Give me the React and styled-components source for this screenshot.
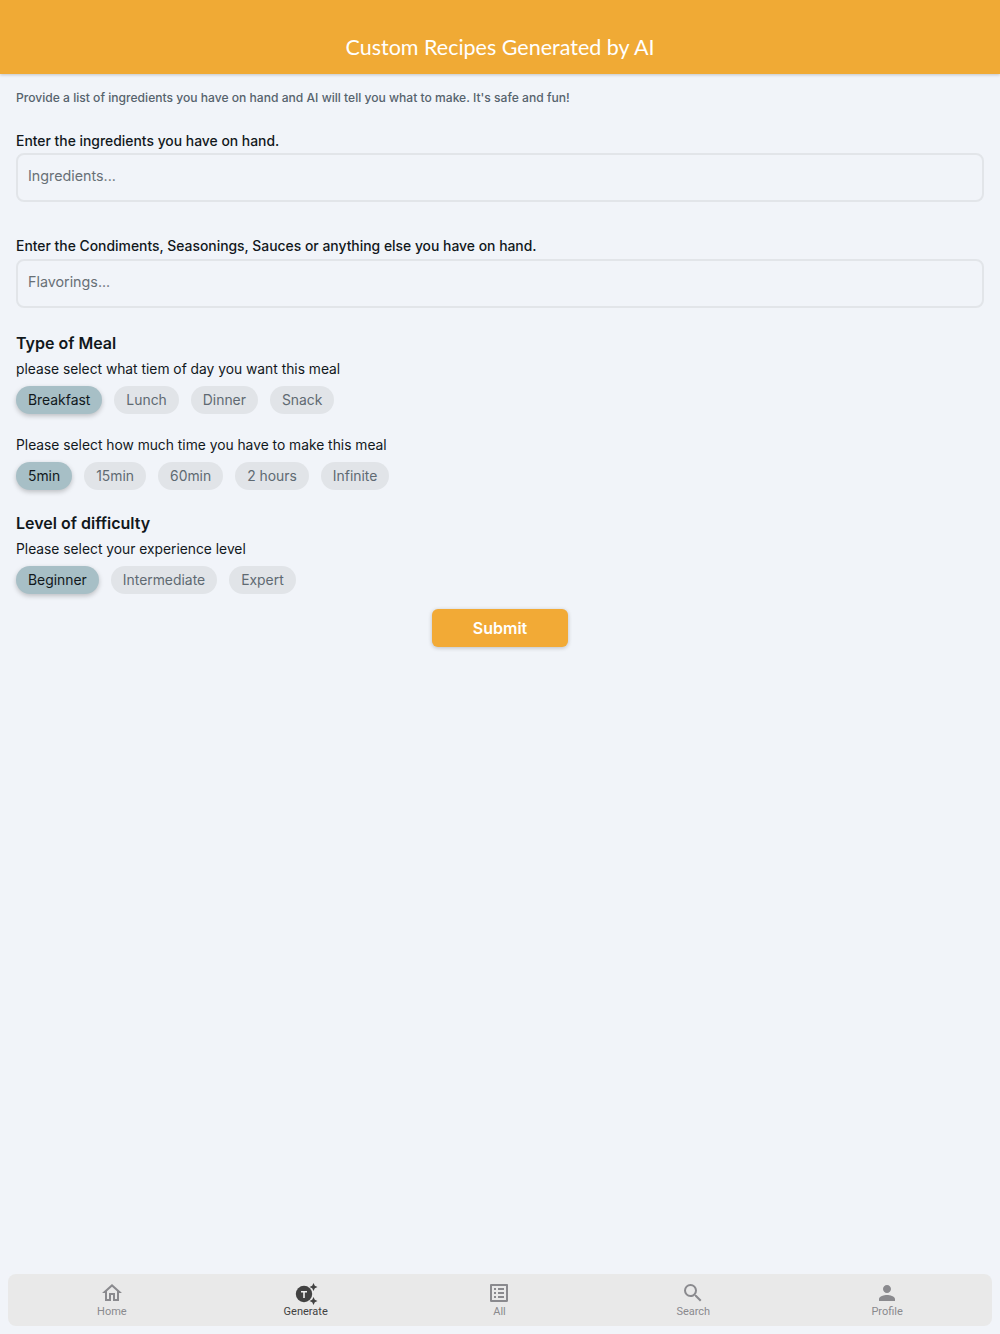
import React from 'react';
import styled, { createGlobalStyle } from 'styled-components';
import { MdOutlineHome, MdListAlt, MdSearch, MdPerson } from 'react-icons/md';

const meals = ['Breakfast', 'Lunch', 'Dinner', 'Snack'];
const times = ['5min', '15min', '60min', '2 hours', 'Infinite'];
const levels = ['Beginner', 'Intermediate', 'Expert'];

function GenerateIcon() {
    return (
        <svg width="24" height="24" viewBox="0 0 24 24">
            <circle cx="10" cy="13" r="8.2" fill="#424242" />
            <path d="M7 10h6v1.6h-2.2V17H9.2v-5.4H7z" fill="#f0f0f0" />
            <path d="M19.5 2l1.3 2.7 2.7 1.3-2.7 1.3-1.3 2.7-1.3-2.7L15.500 6l2.700-1.300z" fill="#424242" />
            <path d="M19.500 16l1.300 2.700 2.700 1.300-2.700 1.300-1.300 2.700-1.300-2.700-2.700-1.300 2.700-1.300z" fill="#424242" />
        </svg>
    );
}

function ChipRow({ items }) {
    return (
        <Chips>
            {items.map((item, i) => (
                <Chip key={item} $active={i === 0}>
                    {item}
                </Chip>
            ))}
        </Chips>
    );
}

export default function App() {
    return (
        <Page>
            <GlobalStyle />
            <Header>
                <Title>Custom Recipes Generated by AI</Title>
            </Header>
            <Main>
                <Intro>Provide a list of ingredients you have on hand and AI will tell you what to make. It's safe and fun!</Intro>
                <FieldLabel>Enter the ingredients you have on hand.</FieldLabel>
                <Input placeholder="Ingredients..." />
                <FieldLabel $second>Enter the Condiments, Seasonings, Sauces or anything else you have on hand.</FieldLabel>
                <Input placeholder="Flavorings..." />
                <Heading>Type of Meal</Heading>
                <Hint>please select what tiem of day you want this meal</Hint>
                <ChipRow items={meals} />
                <Hint $spaced>Please select how much time you have to make this meal</Hint>
                <ChipRow items={times} />
                <Heading $tight>Level of difficulty</Heading>
                <Hint>Please select your experience level</Hint>
                <ChipRow items={levels} />
                <SubmitRow>
                    <Submit>Submit</Submit>
                </SubmitRow>
            </Main>
            <TabBar>
                <Tab>
                    <MdOutlineHome size={24} />
                    <TabLabel>Home</TabLabel>
                </Tab>
                <Tab $active>
                    <GenerateIcon />
                    <TabLabel>Generate</TabLabel>
                </Tab>
                <Tab>
                    <MdListAlt size={24} />
                    <TabLabel>All</TabLabel>
                </Tab>
                <Tab>
                    <MdSearch size={24} />
                    <TabLabel>Search</TabLabel>
                </Tab>
                <Tab>
                    <MdPerson size={24} />
                    <TabLabel>Profile</TabLabel>
                </Tab>
            </TabBar>
        </Page>
    );
}

const GlobalStyle = createGlobalStyle`
    html, body {
        margin: 0;
        padding: 0;
        background: #f1f4f9;
    }
    * {
        box-sizing: border-box;
    }
`;

const Page = styled.div`
    height: 1334px;
    display: flex;
    flex-direction: column;
    background: #f1f4f9;
    font-family: 'Inter', 'Noto Sans', sans-serif;
    color: #11181c;
`;

const Header = styled.header`
    height: 74px;
    background: #f0aa35;
    box-shadow: 0 1px 3px rgba(0, 0, 0, 0.2);
    display: flex;
    align-items: flex-end;
    justify-content: center;
    padding-bottom: 13px;
`;

const Title = styled.h1`
    margin: 0;
    font-family: 'Lato', sans-serif;
    font-size: 21.5px;
    line-height: 28px;
    font-weight: 400;
    color: #ffffff;
`;

const Main = styled.main`
    flex: 1;
    padding: 15px 16px 0;
    display: flex;
    flex-direction: column;
`;

const Intro = styled.p`
    margin: 0;
    font-size: 12.1px;
    line-height: 18px;
    font-weight: 500;
    color: #56636d;
`;

const FieldLabel = styled.label`
    margin-top: ${(p) => (p.$second ? '34px' : '24px')};
    margin-bottom: ${(p) => (p.$second ? '3px' : '2px')};
    font-size: 13.9px;
    line-height: 20px;
    font-weight: 500;
`;

const Input = styled.input`
    height: 49px;
    width: 100%;
    padding: 0 10px 4px;
    border: 2px solid #e2e5e9;
    border-radius: 8px;
    background: transparent;
    font: inherit;
    font-size: 14.300px;
    outline: none;
    &::placeholder {
        color: #687076;
        opacity: 1;
    }
`;

const Heading = styled.h2`
    margin: ${(p) => (p.$tight ? '22px' : '24px')} 0 0;
    font-size: 16px;
    line-height: 22px;
    font-weight: 600;
`;

const Hint = styled.p`
    margin: ${(p) => (p.$spaced ? '21px' : '5px')} 0 7px;
    font-size: 13.8px;
    line-height: 20px;
`;

const Chips = styled.div`
    display: flex;
    gap: 12px;
`;

const Chip = styled.span`
    height: 28px;
    padding: 0 12px 1px;
    display: flex;
    align-items: center;
    border-radius: 14px;
    font-size: 13.9px;
    background: ${(p) => (p.$active ? '#a7bfc6' : '#e1e4e8')};
    color: ${(p) => (p.$active ? '#11181c' : '#5f6a72')};
    box-shadow: ${(p) => (p.$active ? '0 2px 5px rgba(0, 0, 0, 0.22)' : 'none')};
`;

const SubmitRow = styled.div`
    display: flex;
    justify-content: center;
    margin-top: 15px;
`;

const Submit = styled.button`
    width: 136px;
    height: 38px;
    border: 0;
    border-radius: 6px;
    background: #f2aa36;
    box-shadow: 0 1px 4px rgba(0, 0, 0, 0.22);
    color: #ffffff;
    font: inherit;
    font-size: 16px;
    font-weight: 600;
`;

const TabBar = styled.nav`
    height: 52px;
    margin: 0 8px 8px;
    padding: 0 8px 0 7px;
    display: grid;
    grid-template-columns: repeat(5, 1fr);
    background: #e9e9e9;
    border-radius: 8px;
    font-family: 'Roboto', sans-serif;
`;

const Tab = styled.div`
    display: flex;
    flex-direction: column;
    align-items: center;
    padding-top: 7px;
    color: ${(p) => (p.$active ? '#424242' : '#8a8a8e')};
`;

const TabLabel = styled.span`
    font-size: 11px;
    line-height: 13px;
`;
